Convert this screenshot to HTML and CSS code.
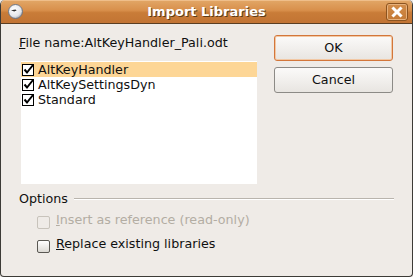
FILE: index.html
```html
<!DOCTYPE html>
<html>
<head>
<meta charset="utf-8">
<link rel="stylesheet" href="styles.css">
</head>
<body>
<div class="window">
  <div class="titlebar">
    <svg class="appicon" width="15" height="15" viewBox="0 0 15 15">
      <defs>
        <radialGradient id="g1" cx="0.4" cy="0.35" r="0.7">
          <stop offset="0" stop-color="#ffffff"/>
          <stop offset="0.7" stop-color="#e4e6ea"/>
          <stop offset="1" stop-color="#9da3ad"/>
        </radialGradient>
      </defs>
      <circle cx="7.5" cy="7.5" r="7" fill="url(#g1)" stroke="#6e7684" stroke-width="1"/>
      <path d="M3 6.2 L7.5 5.4 L8.6 6.4 L6.2 7.6 Z" fill="#2e2e2e"/>
    </svg>
    <div class="title">Import Libraries</div>
    <div class="closebtn">
      <svg width="12" height="12" viewBox="0 0 12 12">
        <path d="M2.5 2.5 L9.5 9.5 M9.5 2.5 L2.5 9.5" stroke="#ffffff" stroke-width="3" stroke-linecap="square"/>
      </svg>
    </div>
  </div>
  <div class="content">
    <div class="top">
      <div class="left">
        <div class="label"><u>F</u>ile name:AltKeyHandler_Pali.odt</div>
        <div class="list">
          <div class="row selected"><span class="lcheck"><svg width="13" height="13" viewBox="0 0 13 13"><rect x="0.5" y="1.5" width="11" height="11" fill="#fff" stroke="#000"/><path d="M2.5 6.5 L5 9.5 L11 2" stroke="#000" stroke-width="2" fill="none"/></svg></span>AltKeyHandler</div>
          <div class="row"><span class="lcheck"><svg width="13" height="13" viewBox="0 0 13 13"><rect x="0.5" y="1.5" width="11" height="11" fill="#fff" stroke="#000"/><path d="M2.5 6.5 L5 9.5 L11 2" stroke="#000" stroke-width="2" fill="none"/></svg></span>AltKeySettingsDyn</div>
          <div class="row"><span class="lcheck"><svg width="13" height="13" viewBox="0 0 13 13"><rect x="0.5" y="1.5" width="11" height="11" fill="#fff" stroke="#000"/><path d="M2.5 6.5 L5 9.5 L11 2" stroke="#000" stroke-width="2" fill="none"/></svg></span>Standard</div>
        </div>
      </div>
      <div class="right">
        <div class="btn default">OK</div>
        <div class="btn">Cancel</div>
      </div>
    </div>
    <div class="options">
      <div class="ohead"><span>Options</span><span class="rule"></span></div>
      <div class="opt disabled"><span class="cb"></span><span><u>I</u>nsert as reference (read-only)</span></div>
      <div class="opt"><span class="cb"></span><span><u>R</u>eplace existing libraries</span></div>
    </div>
  </div>
</div>
</body>
</html>
```
FILE: styles.css
```css
html, body {
  margin: 0;
  padding: 0;
  background: #efebe7;
}
.window {
  width: 411px;
  height: 276px;
  border: 1px solid #3c3b37;
  border-top: none;
  border-radius: 5px 5px 4px 4px;
  background: #efebe7;
  font-family: "DejaVu Sans", sans-serif;
  font-size: 12.7px;
  color: #101010;
  display: flex;
  flex-direction: column;
  overflow: hidden;
}
.titlebar {
  height: 23px;
  margin: 0 -1px;
  border-bottom: 1px solid #5a3e22;
  border-radius: 5px 5px 0 0;
  background: linear-gradient(#e2a767 0%, #d88f4b 45%, #c97c38 55%, #c27434 100%);
  box-shadow: inset 0 1px 0 #efbe8a;
  display: grid;
  grid-template-columns: 1fr auto 1fr;
  align-items: center;
}
.appicon {
  margin-left: 8px;
  justify-self: start;
}
.title {
  text-align: center;
  color: #ffffff;
  font-weight: bold;
  font-size: 13px;
  text-shadow: 1px 1px 0 #5e3b18;
}
.closebtn {
  justify-self: end;
  width: 20px;
  height: 16px;
  margin-right: 5px;
  border: 1px solid #8c5420;
  box-shadow: inset 0 0 0 1px #e7b17c;
  border-radius: 3px;
  background: linear-gradient(#d38d4a, #c47a36);
  display: flex;
  align-items: center;
  justify-content: center;
}
.content {
  padding: 11px 18px 0 18px;
  display: flex;
  flex-direction: column;
}
.top {
  display: flex;
}
.left {
  width: 238px;
  display: flex;
  flex-direction: column;
}
.label {
  height: 15px;
  line-height: 15px;
  white-space: nowrap;
}
.list {
  margin-top: 11px;
  margin-left: 2px;
  height: 122px;
  padding-top: 1px;
  background: #ffffff;
}
.row {
  height: 15px;
  line-height: 15px;
  display: flex;
  align-items: center;
}
.row.selected {
  background: #fdd696;
}
.lcheck {
  width: 13px;
  height: 13px;
  margin-left: 1px;
  margin-right: 3px;
  display: flex;
}
.right {
  margin-left: 17px;
  width: 119px;
  display: flex;
  flex-direction: column;
  gap: 6px;
}
.btn {
  height: 24px;
  border: 1px solid #8c8a86;
  border-radius: 3px;
  background: linear-gradient(#fbfaf9, #e8e5e1);
  text-align: center;
  line-height: 24px;
}
.btn.default {
  border-color: #d3763a;
  box-shadow: inset 0 0 0 1px #f2c8a4;
}
.options {
  margin-top: 7px;
  display: flex;
  flex-direction: column;
}
.ohead {
  height: 15px;
  line-height: 15px;
  display: flex;
  align-items: center;
}
.rule {
  flex: 1;
  height: 1px;
  margin-left: 6px;
  background: #b9b4ad;
  box-shadow: 0 1px 0 #ffffff;
}
.opt {
  height: 15px;
  line-height: 15px;
  display: flex;
  align-items: center;
  margin-left: 18px;
  margin-top: 6px;
}
.opt + .opt {
  margin-top: 9px;
}
.cb {
  width: 11px;
  height: 11px;
  border: 1px solid #5a5853;
  border-radius: 2px;
  background: linear-gradient(#ffffff, #dcd9d4);
  margin-right: 6px;
  margin-top: 6px;
}
.opt.disabled {
  color: #b3ada3;
}
.opt.disabled .cb {
  border-color: #c8c3bb;
  background: #efebe7;
}
```
